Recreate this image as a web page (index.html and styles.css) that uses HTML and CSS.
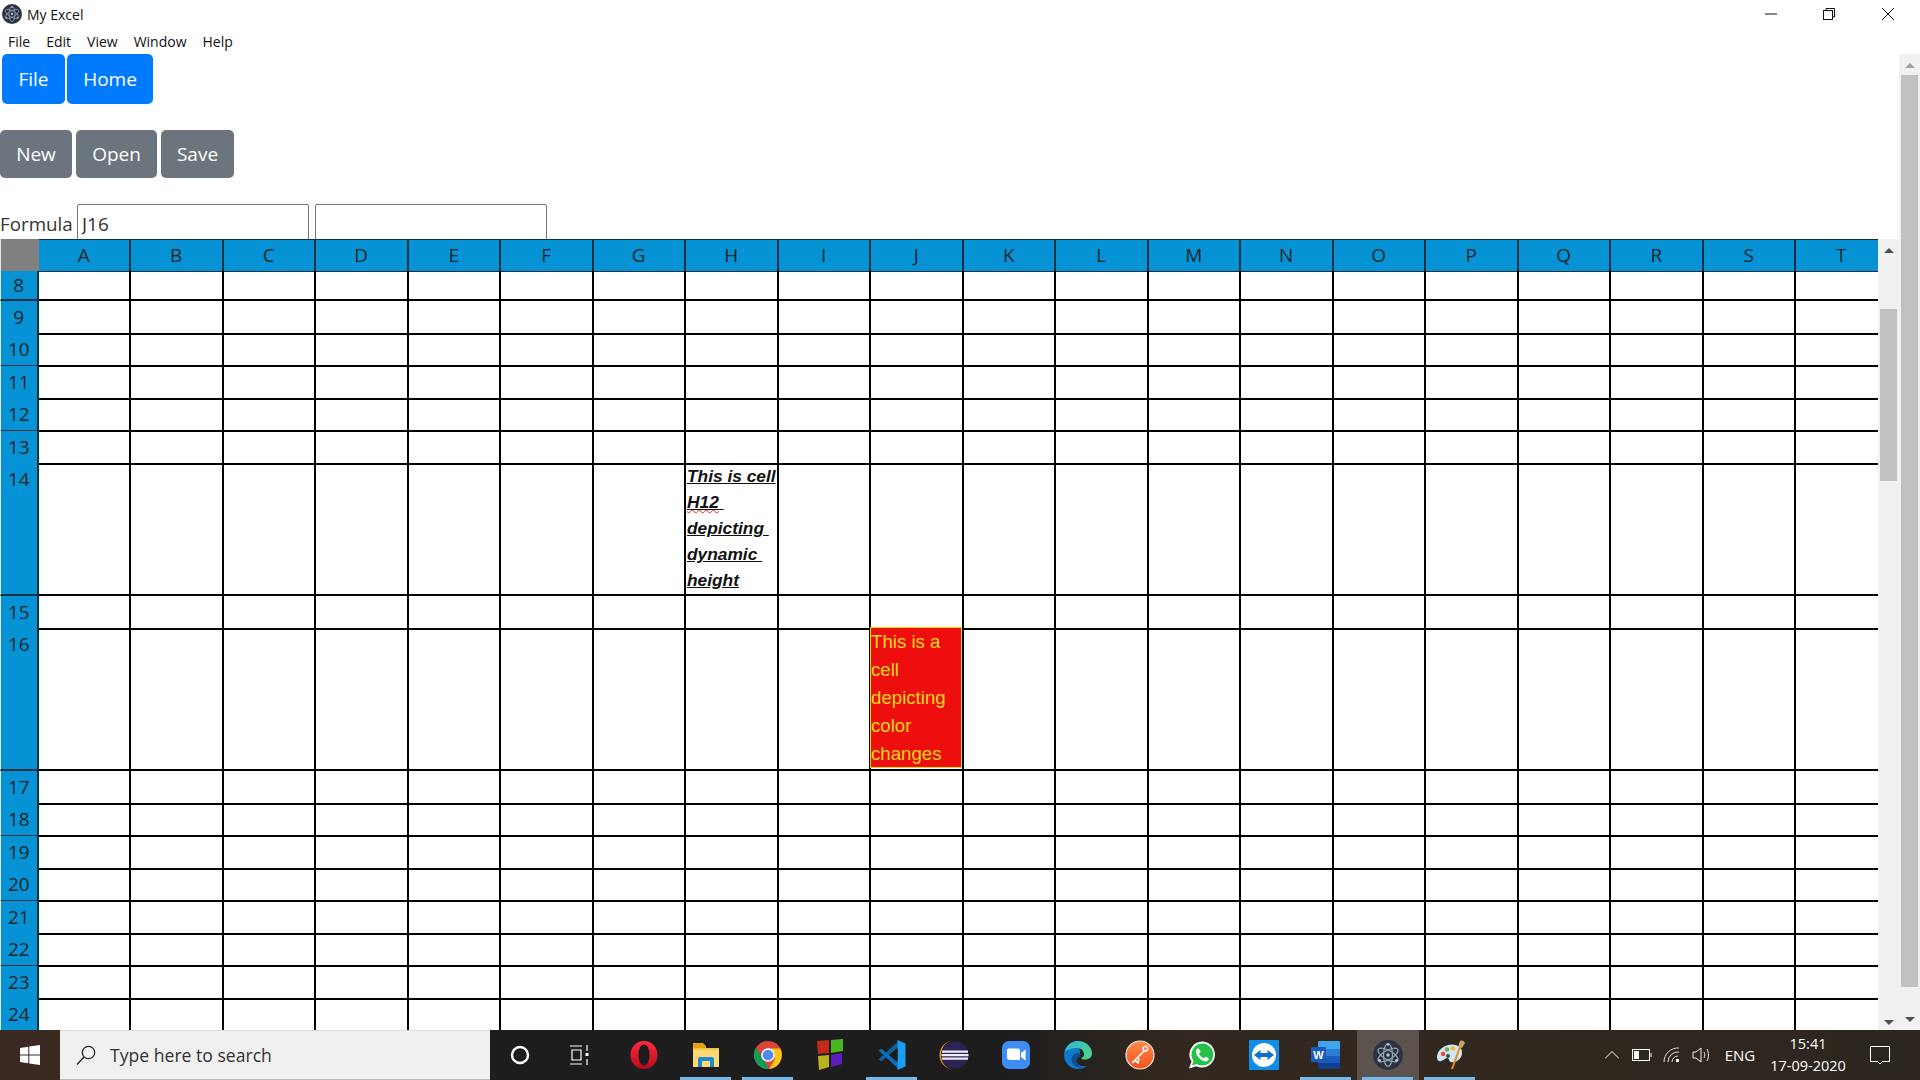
FILE: index.html
```html
<!DOCTYPE html>
<html lang="en">
<head>
<meta charset="utf-8">
<title>My Excel</title>
<link rel="stylesheet" href="styles.css">
</head>
<body>
<svg class="defs" width="0" height="0" aria-hidden="true">
  <defs>
    <symbol id="electron" viewBox="0 0 28 28">
      <circle cx="14" cy="14" r="14" fill="#2d3142"/>
      <g fill="none" stroke="#93a8b5" stroke-width="1.1">
        <ellipse cx="14" cy="14" rx="10.5" ry="4.2" transform="rotate(30 14 14)"/>
        <ellipse cx="14" cy="14" rx="10.5" ry="4.2" transform="rotate(90 14 14)"/>
        <ellipse cx="14" cy="14" rx="10.5" ry="4.2" transform="rotate(150 14 14)"/>
      </g>
      <circle cx="14" cy="14" r="1.6" fill="#b6c8d2"/>
      <circle cx="14" cy="4" r="1.3" fill="#b6c8d2"/>
      <circle cx="6" cy="19" r="1.3" fill="#b6c8d2"/>
      <circle cx="22" cy="19" r="1.3" fill="#b6c8d2"/>
    </symbol>
    <linearGradient id="opera" x1="0" y1="0" x2="0" y2="1"><stop offset="0" stop-color="#ff2b3c"/><stop offset="1" stop-color="#b50a1c"/></linearGradient>
    <linearGradient id="edge" x1="0" y1="0" x2="1" y2="1"><stop offset="0" stop-color="#2fb7d8"/><stop offset="1" stop-color="#4fd67a"/></linearGradient>
    <linearGradient id="postman" x1="0" y1="0" x2="0" y2="1"><stop offset="0" stop-color="#ff8a4c"/><stop offset="1" stop-color="#f4511e"/></linearGradient>
  </defs>
</svg>
<div class="screen">
  <header class="titlebar">
    <svg class="app-icon" width="20" height="20"><use href="#electron"/></svg>
    <span class="app-title">My Excel</span>
    <div class="window-controls">
      <span class="wc"><svg width="14" height="14" viewBox="0 0 14 14"><path d="M1 7h12" stroke="#111" stroke-width="1"/></svg></span>
      <span class="wc"><svg width="14" height="14" viewBox="0 0 14 14" fill="none" stroke="#111"><rect x="1.5" y="3.5" width="9" height="9"/><path d="M4 3.5V1.5h8.5V10h-2"/></svg></span>
      <span class="wc"><svg width="14" height="14" viewBox="0 0 14 14"><path d="M1 1l12 12M13 1L1 13" stroke="#111" stroke-width="1"/></svg></span>
    </div>
  </header>
  <nav class="menubar">
    <span class="menu-item">File</span>
    <span class="menu-item">Edit</span>
    <span class="menu-item">View</span>
    <span class="menu-item">Window</span>
    <span class="menu-item">Help</span>
  </nav>
  <main class="main">
    <div class="page">
      <div class="tabs">
        <button class="btn btn-primary btn-file">File</button>
        <button class="btn btn-primary btn-home">Home</button>
      </div>
      <div class="toolbar">
        <button class="btn btn-secondary btn-new">New</button>
        <button class="btn btn-secondary btn-open">Open</button>
        <button class="btn btn-secondary btn-save">Save</button>
      </div>
      <div class="formula">
        <label class="formula-label">Formula</label>
        <input class="formula-input" value="J16">
        <input class="formula-input">
      </div>
      <div class="sheet">
        <div class="grid">
          <div class="row row-head">
            <b class="corner"></b><b>A</b><b>B</b><b>C</b><b>D</b><b>E</b><b>F</b><b>G</b><b>H</b><b>I</b><b>J</b><b>K</b><b>L</b><b>M</b><b>N</b><b>O</b><b>P</b><b>Q</b><b>R</b><b>S</b><b>T</b>
          </div>
          <div class="row row-cut"><b>8</b><i></i><i></i><i></i><i></i><i></i><i></i><i></i><i></i><i></i><i></i><i></i><i></i><i></i><i></i><i></i><i></i><i></i><i></i><i></i><i></i></div>
          <div class="row"><b>9</b><i></i><i></i><i></i><i></i><i></i><i></i><i></i><i></i><i></i><i></i><i></i><i></i><i></i><i></i><i></i><i></i><i></i><i></i><i></i><i></i></div>
          <div class="row"><b>10</b><i></i><i></i><i></i><i></i><i></i><i></i><i></i><i></i><i></i><i></i><i></i><i></i><i></i><i></i><i></i><i></i><i></i><i></i><i></i><i></i></div>
          <div class="row"><b>11</b><i></i><i></i><i></i><i></i><i></i><i></i><i></i><i></i><i></i><i></i><i></i><i></i><i></i><i></i><i></i><i></i><i></i><i></i><i></i><i></i></div>
          <div class="row"><b>12</b><i></i><i></i><i></i><i></i><i></i><i></i><i></i><i></i><i></i><i></i><i></i><i></i><i></i><i></i><i></i><i></i><i></i><i></i><i></i><i></i></div>
          <div class="row"><b>13</b><i></i><i></i><i></i><i></i><i></i><i></i><i></i><i></i><i></i><i></i><i></i><i></i><i></i><i></i><i></i><i></i><i></i><i></i><i></i><i></i></div>
          <div class="row row-14"><b>14</b><i></i><i></i><i></i><i></i><i></i><i></i><i></i><i class="cell-note"><span class="note-line">This is cell</span><span class="note-line"><span class="squiggle">H12</span><span>&nbsp;</span></span><span class="note-line">depicting&nbsp;</span><span class="note-line">dynamic&nbsp;</span><span class="note-line">height</span></i><i></i><i></i><i></i><i></i><i></i><i></i><i></i><i></i><i></i><i></i><i></i><i></i></div>
          <div class="row"><b>15</b><i></i><i></i><i></i><i></i><i></i><i></i><i></i><i></i><i></i><i></i><i></i><i></i><i></i><i></i><i></i><i></i><i></i><i></i><i></i><i></i></div>
          <div class="row row-16"><b>16</b><i></i><i></i><i></i><i></i><i></i><i></i><i></i><i></i><i></i><i><span class="cell-color">This is a cell depicting color changes</span></i><i></i><i></i><i></i><i></i><i></i><i></i><i></i><i></i><i></i><i></i></div>
          <div class="row"><b>17</b><i></i><i></i><i></i><i></i><i></i><i></i><i></i><i></i><i></i><i></i><i></i><i></i><i></i><i></i><i></i><i></i><i></i><i></i><i></i><i></i></div>
          <div class="row"><b>18</b><i></i><i></i><i></i><i></i><i></i><i></i><i></i><i></i><i></i><i></i><i></i><i></i><i></i><i></i><i></i><i></i><i></i><i></i><i></i><i></i></div>
          <div class="row"><b>19</b><i></i><i></i><i></i><i></i><i></i><i></i><i></i><i></i><i></i><i></i><i></i><i></i><i></i><i></i><i></i><i></i><i></i><i></i><i></i><i></i></div>
          <div class="row"><b>20</b><i></i><i></i><i></i><i></i><i></i><i></i><i></i><i></i><i></i><i></i><i></i><i></i><i></i><i></i><i></i><i></i><i></i><i></i><i></i><i></i></div>
          <div class="row"><b>21</b><i></i><i></i><i></i><i></i><i></i><i></i><i></i><i></i><i></i><i></i><i></i><i></i><i></i><i></i><i></i><i></i><i></i><i></i><i></i><i></i></div>
          <div class="row"><b>22</b><i></i><i></i><i></i><i></i><i></i><i></i><i></i><i></i><i></i><i></i><i></i><i></i><i></i><i></i><i></i><i></i><i></i><i></i><i></i><i></i></div>
          <div class="row"><b>23</b><i></i><i></i><i></i><i></i><i></i><i></i><i></i><i></i><i></i><i></i><i></i><i></i><i></i><i></i><i></i><i></i><i></i><i></i><i></i><i></i></div>
          <div class="row"><b>24</b><i></i><i></i><i></i><i></i><i></i><i></i><i></i><i></i><i></i><i></i><i></i><i></i><i></i><i></i><i></i><i></i><i></i><i></i><i></i><i></i></div>
        </div>
        <div class="scrollbar scrollbar-inner">
          <span class="arrow-up dark"></span>
          <span class="thumb"></span>
          <span class="arrow-down"></span>
        </div>
      </div>
    </div>
    <div class="scrollbar scrollbar-outer">
      <span class="arrow-up"></span>
      <span class="thumb"></span>
      <span class="arrow-down"></span>
    </div>
  </main>
  <footer class="taskbar">
    <div class="start">
      <svg width="20" height="20" viewBox="0 0 20 20" fill="#fff"><path d="M0 3l8.300-1.200v7.700H0zM9.300 1.600L20 0v9.500H9.300zM0 10.500h8.300v7.700L0 17zM9.300 10.500H20V20L9.300 18.400z"/></svg>
    </div>
    <div class="search">
      <svg width="22" height="22" viewBox="0 0 22 22" fill="none" stroke="#222" stroke-width="1.3"><circle cx="13.500" cy="8.500" r="6.200"/><path d="M9 13L2 20.500"/></svg>
      <span>Type here to search</span>
    </div>
    <div class="task-btn">
      <svg width="22" height="22" viewBox="0 0 22 22" fill="none" stroke="#fff" stroke-width="2.4"><circle cx="11" cy="11" r="8"/></svg>
    </div>
    <div class="task-btn task-view">
      <svg width="22" height="22" viewBox="0 0 22 22" fill="none" stroke="#fff" stroke-width="1.2"><path d="M1 2h12M1 20h12M3 6h9v10H3zM18 1v6M18 15v6"/><rect x="16.500" y="9" width="3" height="3" fill="#fff" stroke="none"/></svg>
    </div>
    <div class="app">
      <svg width="30" height="30" viewBox="0 0 30 30"><path fill="url(#opera)" fill-rule="evenodd" d="M15 1C7 1 1.500 7.300 1.500 15S7 29 15 29s13.500-6.300 13.500-14S23 1 15 1zm0 3.500c3.300 0 5.500 4.800 5.500 10.500S18.300 25.500 15 25.500 9.500 20.700 9.500 15 11.700 4.500 15 4.500z"/></svg>
    </div>
    <div class="app is-open">
      <svg width="30" height="30" viewBox="0 0 30 30"><path fill="#e5a40f" d="M2 3h10l3 3v4H2z"/><path fill="#ffd96f" d="M2 8h26v19H2z"/><path fill="#f4c24a" d="M2 8h26v2H2z"/><path fill="#1b8ad6" d="M9 17h12a2 2 0 0 1 2 2v8h-4v-6h-8v6H7v-8a2 2 0 0 1 2-2z"/></svg>
    </div>
    <div class="app is-open">
      <svg width="30" height="30" viewBox="0 0 30 30"><circle cx="15" cy="15" r="14" fill="#dc4437"/><path fill="#ffc517" d="M15 8.500h12.200a14 14 0 0 1-11 20.500l6-10.500z"/><path fill="#0f9d58" d="M3.200 7.500l6.100 10.600 6.900 10.900a14 14 0 0 1-13-21.500z"/><circle cx="15" cy="15" r="6.800" fill="#fff"/><circle cx="15" cy="15" r="5.300" fill="#4c8bf5"/></svg>
    </div>
    <div class="app">
      <svg width="30" height="32" viewBox="0 0 30 32"><path fill="#c22a17" d="M2 2l12-1v13l-11 1z"/><path fill="#49b51f" d="M16 1l12-1v12l-12 2z"/><path fill="#b9b320" d="M3 17l11-1v12l-10 3z"/><path fill="#5a1dc0" d="M16 16l11-2v11l-11 3z"/></svg>
    </div>
    <div class="app is-open">
      <svg width="30" height="32" viewBox="0 0 30 32"><path fill="#0a6fb8" d="M1.500 11.500l3-1.800 19 16.300-3 3z"/><path fill="#0a6fb8" d="M1.500 20.500l3 1.800 19-16.300-3-3z" opacity=".85"/><path fill="#1a9cf0" d="M20.500 1l8 3.500v23l-8 3.500z"/><path fill="#1c1c1c" d="M20.500 10.500v11L14 16z"/></svg>
    </div>
    <div class="app">
      <svg width="30" height="30" viewBox="0 0 30 30"><path fill="#f7941e" d="M15 .5A14.500 14.500 0 0 0 15 29.500a13 14.500 0 0 1 0-29z"/><circle cx="16" cy="15" r="13.500" fill="#2c2255"/><path fill="#eeeaf6" d="M3 10.500h26v2.200H3zM2.500 14h27v2.200h-27zM3 17.500h26v2.200H3z"/></svg>
    </div>
    <div class="app">
      <svg width="30" height="30" viewBox="0 0 30 30"><rect x="1" y="1" width="28" height="28" rx="7" fill="#3f8cf5"/><path fill="#fff" d="M6 10a1.500 1.500 0 0 1 1.500-1.500H17a2 2 0 0 1 2 2V20H9a3 3 0 0 1-3-3zM20 13l4.500-3.500v11L20 17z"/></svg>
    </div>
    <div class="app">
      <svg width="30" height="30" viewBox="0 0 30 30"><path fill="#0f7ac9" d="M15 1A14 14 0 0 0 1 15c0 8 6.500 14 14 14 3.500 0 6.500-1 9-3-4 1-11-.5-11-6.500 0-3 3-4.500 4-7z"/><path fill="#0b4f8f" d="M15 13c-4 0-6.500 3-6.500 6.500 0 5 5 9 11 8-4-1-6.500-4-6-7 .3-3 4-3.500 4-5.500 0-1-1-2-2.500-2z"/><path fill="url(#edge)" d="M2 12C3 5.500 9 1 15 1c8 0 14 6 14 12.500 0 4-3.500 6-7 6-2 0-3.500-.5-4-1.500 2-.5 3.500-2 3-4.500C20 9 16 7.500 12 8 7.500 8.500 3.500 10 2 12z"/></svg>
    </div>
    <div class="app">
      <svg width="30" height="30" viewBox="0 0 30 30"><circle cx="15" cy="15" r="14" fill="url(#postman)" stroke="#f0e6df" stroke-width="1.200"/><path d="M7 23L19 11l-1-3c1-2 3-2 4-1s1 3-1 4l-2 0M10 20l3 3 1-5" fill="none" stroke="#fff" stroke-width="1.500"/></svg>
    </div>
    <div class="app">
      <svg width="30" height="30" viewBox="0 0 30 30"><path fill="#fff" d="M15.500 1.500a13 13 0 0 0-11 20L2 28.500l7.300-2.300A13 13 0 1 0 15.500 1.500z"/><path fill="#25c149" d="M15.500 3.500a11 11 0 0 0-9 17.300L5 25.500l4.800-1.500a11 11 0 1 0 5.700-20.500z"/><path fill="#fff" d="M11 8.500c-.8 0-2 1.200-2 3 0 4 4.500 9.500 9.500 10 1.800 0 3.300-1.500 3.300-2.700 0-.6-2.800-2.300-3.400-2.100-.6.200-1 1.500-1.600 1.500-1.500 0-4.500-3-4.700-4.600 0-.6 1.300-1.100 1.400-1.700.1-.7-1.400-3.400-2.500-3.400z"/></svg>
    </div>
    <div class="app">
      <svg width="30" height="30" viewBox="0 0 30 30"><rect width="30" height="30" rx="1" fill="#0e8ee9"/><circle cx="15" cy="15" r="12" fill="#fff"/><path fill="#0e6fc4" d="M5 15l6.500-5v3h7v-3l6.500 5-6.500 5v-3h-7v3z"/></svg>
    </div>
    <div class="app is-open">
      <svg width="30" height="30" viewBox="0 0 30 30"><path fill="#41a5ee" d="M8 1h20a1 1 0 0 1 1 1v7H7V2a1 1 0 0 1 1-1z"/><path fill="#2b7cd3" d="M7 9h22v7H7z"/><path fill="#185abd" d="M7 16h22v7H7z"/><path fill="#103f91" d="M7 23h22v5a1 1 0 0 1-1 1H8a1 1 0 0 1-1-1z"/><rect x="0" y="7" width="15" height="15" rx="1" fill="#185abd"/><text class="word-w" x="7.500" y="19">W</text></svg>
    </div>
    <div class="app is-active is-open">
      <svg width="30" height="30"><use href="#electron"/></svg>
    </div>
    <div class="app is-open">
      <svg width="32" height="32" viewBox="0 0 32 32"><path fill="#cfe6f2" d="M14 6c8-2 15 2 14 9-1 6-7 9-11 8-3-1-1-4-4-4-3 1-5 4-8 3C1 20 3 9 14 6z"/><circle cx="9" cy="15" r="2.200" fill="#e2483d"/><circle cx="13" cy="10.500" r="2.200" fill="#6ab04c"/><circle cx="19" cy="9.500" r="2.200" fill="#f6b93b"/><circle cx="14" cy="17" r="2" fill="#3c4a55"/><path d="M18 30L26 8" stroke="#e98a15" stroke-width="2"/><path fill="#c9a26a" d="M24 8l2-6c2-1 4 0 5 2l-3 5z"/></svg>
    </div>
    <div class="tray">
      <span class="tray-item"><svg width="14" height="14" viewBox="0 0 14 14" fill="none" stroke="#fff"><path d="M0 10.500L7 3.500l7 7"/></svg></span>
      <span class="tray-item"><svg width="20" height="12" viewBox="0 0 20 12" fill="none" stroke="#fff"><rect x=".5" y=".5" width="17" height="11"/><rect x="2" y="2" width="5" height="8" fill="#fff" stroke="none"/><path d="M19 4v4"/></svg></span>
      <span class="tray-item"><svg width="18" height="16" viewBox="0 0 18 16" fill="none" stroke="#ddd"><path d="M1 15A14 14 0 0 1 16 1M5 15A10 10 0 0 1 16 5M9 15a6 6 0 0 1 6-6"/><rect x="13" y="12" width="3" height="3" fill="#fff" stroke="none"/></svg></span>
      <span class="tray-item"><svg width="20" height="18" viewBox="0 0 20 18" fill="none" stroke="#eee"><path d="M1 6h3l5-4v14l-5-4H1zM12 6c1 2 1 4 0 6M15 3c2 4 2 8 0 12"/></svg></span>
      <span class="tray-lang">ENG</span>
      <span class="clock"><span>15:41</span><span>17-09-2020</span></span>
      <span class="notify"><svg width="20" height="20" viewBox="0 0 20 20" fill="none" stroke="#fff"><path d="M.5 1.500h19v15h-7l-2.500 2.500-2.500-2.500h-7z"/></svg></span>
    </div>
  </footer>
</div>
</body>
</html>
```
FILE: styles.css
```css
* { box-sizing: border-box; }
html, body { margin: 0; padding: 0; background: #fff; }
.defs { position: absolute; }
.screen {
  width: 1920px; height: 1080px; overflow: hidden;
  display: flex; flex-direction: column;
  font-family: "Open Sans", "Noto Sans", sans-serif; color: #212529;
}
.titlebar { height: 28px; display: flex; align-items: center; padding-left: 2px; font-size: 14px; color: #111; }
.app-icon { margin-right: 5px; }
.window-controls { margin-left: auto; margin-right: 3px; display: flex; }
.wc { width: 58.5px; height: 28px; display: flex; align-items: center; justify-content: center; }
.menubar { height: 26px; display: flex; align-items: center; font-size: 14px; color: #111; }
.menu-item { padding: 0 8px; }

.main { height: 976px; display: flex; }
.page { flex: 1; min-width: 0; display: flex; flex-direction: column; }

.btn {
  display: block; border: 0; border-radius: 5px; color: #fff; padding: 0;
  font-family: inherit; font-size: 19px; text-align: center;
}
.btn-primary { background: #007bff; height: 50px; }
.btn-secondary { background: #6c757d; height: 48px; }
.tabs { display: flex; gap: 2px; padding-left: 2px; height: 50px; }
.btn-file { width: 63px; }
.btn-home { width: 86px; }
.toolbar { display: flex; gap: 4px; margin-top: 26px; height: 48px; }
.btn-new { width: 72px; }
.btn-open { width: 81px; }
.btn-save { width: 73px; }

.formula { margin-top: 26px; height: 35px; overflow: hidden; display: flex; font-size: 18.8px; color: #333; }
.formula-label { width: 77px; line-height: 40px; }
.formula-input {
  width: 232px; height: 40px; margin-right: 6px; padding: 0 4px;
  border: 1px solid #767676; border-radius: 2px;
  font-family: inherit; font-size: 19px; color: #333; background: #fff;
}

.sheet { flex: 1; min-height: 0; display: flex; }
.grid { width: 1878px; overflow: hidden; }
.row { display: grid; grid-template-columns: 38.5px repeat(20, 92.5px); width: 1888.5px; height: 32.5px; }
.row-head { height: 32px; }
.row-cut { height: 29.5px; }
.row-14 { height: 132.5px; }
.row-16 { height: 142.5px; }
.row b, .row i {
  display: block; border-right: 2px solid #000; border-bottom: 2px solid #000;
  font-weight: 400; font-style: normal;
}
.row b {
  background: #0593d6; color: #212529; border-color: #14303f;
  font-size: 19px; line-height: 32px; text-align: center;
}
.row > b:first-child { border-left: 1px solid #e6e6e6; }
.row-cut b { line-height: 28px; }
.row-head b { border-top: 1px solid #14303f; border-bottom-width: 1px; line-height: 31px; }
.row-head .corner { background: #808080; border: 0; }

.row .cell-note {
  font: italic 700 17.33px/26px "Liberation Sans", Arial, sans-serif;
  color: #111; padding-left: 1px; overflow: hidden;
}
.note-line { display: block; white-space: nowrap; text-decoration: underline; }
.squiggle { text-decoration: underline wavy #e22; text-decoration-thickness: 1px; }
.cell-color {
  display: block; height: 100%; margin: -1px 0 0 -1px;
  background: #ef0e0e; border: 1px solid #dcdc10; color: #e6d81e;
  font: 18.67px/28px "Liberation Sans", Arial, sans-serif;
}

.scrollbar { width: 21px; flex: none; background: #f1f1f1; display: flex; flex-direction: column; align-items: center; }
.thumb { width: 17px; background: #c1c1c1; display: block; }
.arrow-up, .arrow-down { width: 0; height: 0; border-left: 5px solid transparent; border-right: 5px solid transparent; }
.arrow-up { border-bottom: 5px solid #a3a3a3; }
.arrow-up.dark { border-bottom-color: #505050; }
.arrow-down { border-top: 5px solid #505050; margin-top: auto; }
.scrollbar-inner { height: 791px; padding: 9px 0 5px; }
.scrollbar-inner .thumb { height: 172px; margin-top: 56px; }
.scrollbar-outer { padding: 9px 0 8px; }
.scrollbar-outer .thumb { height: 912px; margin-top: 7px; }

.taskbar {
  height: 50px; flex: none; display: flex; align-items: stretch;
  background: linear-gradient(90deg, #3a2a22 0, #3a2a22 60px, #1d1d1d 500px, #1d1d1d 1000px, #33281f 1180px, #2d261f 1920px);
  color: #fff;
}
.start { width: 60px; display: flex; align-items: center; justify-content: center; }
.search {
  width: 430px; background: #f0f0f0; border-bottom: 1px solid #bbb; border-top: 1px solid #ddd;
  display: flex; align-items: center; padding-left: 15px; gap: 13px;
  font-size: 17.6px; color: #333;
}
.task-btn { width: 60px; display: flex; align-items: center; justify-content: center; }
.task-view { margin-right: 3px; }
.app { width: 62px; display: flex; align-items: center; justify-content: center; position: relative; }
.app.is-active { background: #5c534e; }
.app.is-open::after {
  content: ""; position: absolute; left: 5px; right: 6px; bottom: 0; height: 3px; background: #76b9ed;
}
.word-w { fill: #fff; font: 700 11px "Liberation Sans", sans-serif; text-anchor: middle; }
.tray { margin-left: auto; padding-right: 13px; display: flex; align-items: center; }
.tray-item { width: 30px; display: flex; justify-content: center; }
.tray-lang { width: 46px; text-align: center; font-size: 15px; }
.clock { width: 90px; display: flex; flex-direction: column; align-items: center; font-size: 14.5px; line-height: 22px; }
.notify { width: 54px; display: flex; justify-content: center; }
```
